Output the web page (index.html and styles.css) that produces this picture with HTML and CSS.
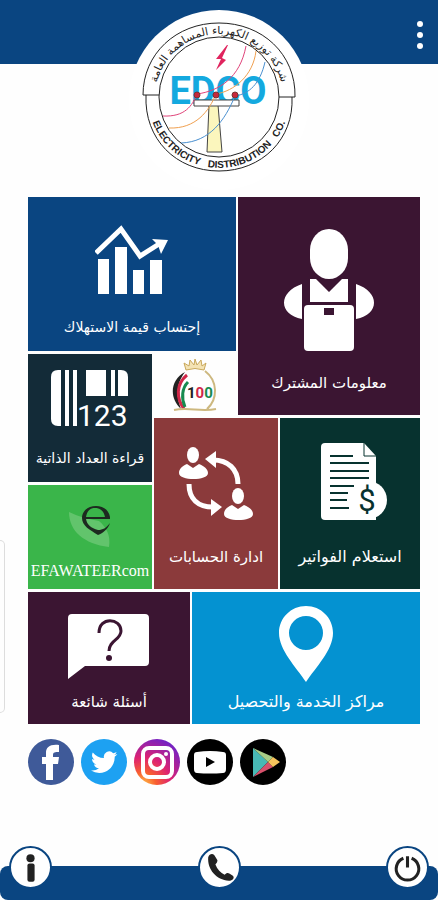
FILE: index.html
```html
<!DOCTYPE html>
<html lang="ar">
<head>
  <meta charset="UTF-8">
  <meta name="viewport" content="width=device-width, initial-scale=1.0">
  <title>EDCO</title>
  <link rel="stylesheet" href="styles.css">
</head>
<body>
  <header class="top-bar">
    <svg class="logo" viewBox="0 0 180 180" role="img" aria-label="EDCO">
      <defs>
        <path id="ring-top" d="M26 88a64 64 0 0 1 128 0"/>
        <path id="ring-bottom" d="M19 87a71 71 0 0 0 142 0"/>
      </defs>
      <circle cx="90" cy="90" r="90" fill="#fff"/>
      <g fill="none" stroke="#222" stroke-width="1">
        <path d="M14 85C14 44 47 13 90 13s77 31 76 74h-16"/>
        <path d="M14 85h16M17 85c-2 44 30 76 73 76s75-32 73-74"/>
        <circle cx="90" cy="87" r="60"/>
      </g>
      <text class="ring-ar" direction="rtl"><textPath href="#ring-top" startOffset="50%" text-anchor="middle">شركة توزيع الكهرباء المساهمة العامة</textPath></text>
      <text class="ring-en"><textPath href="#ring-bottom" startOffset="50%" text-anchor="middle">ELECTRICITY&#160;&#160;&#160;DISTRIBUTION&#160;&#160;&#160;CO.</textPath></text>
      <text class="logo-name" x="89" y="94" text-anchor="middle">EDCO</text>
      <path d="M98 35l-11 14h5l-5 11 10-10-4-2 6-13z" fill="#e0245e"/>
      <path d="M80 95h9l4 47H78z" fill="#fbf6bd" stroke="#444"/>
      <path d="M65 90h45v6H65z" fill="#fff" stroke="#444"/>
      <g fill="none" stroke-width="1">
        <path d="M117 36c-6 32-27 45-49 48-5 12-12 23-34 22" stroke="#e0447a"/>
        <path d="M127 41c-3 25-22 40-40 43-7 17-20 35-47 34" stroke="#f0a050"/>
        <path d="M136 52c-5 22-16 32-30 34-10 24-25 46-54 47" stroke="#4a90d0"/>
      </g>
      <g fill="#c8283c" stroke="#733"><circle cx="68" cy="85" r="3"/><circle cx="87" cy="85" r="3"/><circle cx="106" cy="85" r="3"/></g>
    </svg>
    <button class="menu" aria-label="القائمة"><span></span><span></span><span></span></button>
  </header>

  <main>
    <nav class="tiles">
      <a href="#" class="tile usage">
        <svg width="74" height="70" viewBox="0 0 74 70" fill="#fff">
          <path d="M3 34h11v35H3zM20 22h12v47H20zM38 45h11v24H38zM55 35h12v34H55z"/>
          <path d="M1 28L26 4l19 27 19-12" fill="none" stroke="#fff" stroke-width="5"/>
          <path d="M57 14l16 1-7 14-3-9z"/>
        </svg>
        <span class="label">إحتساب قيمة الاستهلاك</span>
      </a>
      <a href="#" class="tile customer">
        <svg width="92" height="123" viewBox="0 0 92 123" fill="#fff">
          <rect x="27" y="1" width="38" height="50" rx="19" ry="21"/>
          <path d="M27 51h6l13 13 13-13h6v23H27zM19 56v35C-5 86-5 64 19 56zM73 56v35c24-5 24-27 0-35z"/>
          <rect x="21" y="77" width="50" height="46" rx="4"/>
          <path d="M41 80h10v7H41z" fill="#3b1532"/>
        </svg>
        <span class="label">معلومات المشترك</span>
      </a>
      <a href="#" class="tile meter">
        <svg width="78" height="64" viewBox="0 0 78 64" fill="#fff">
          <path d="M10 0v56H7q-7 0-7-7V7q0-7 7-7zM14 0h4v56h-4zM22 0h4v56h-4zM35 0h20v26H35zM60 0h4v26h-4zM67 0h3q7 0 7 7v19H67z"/>
          <text class="digits" x="26" y="56">123</text>
        </svg>
        <span class="label">قراءة العداد الذاتية</span>
      </a>
      <div class="tile centenary">
        <svg width="46" height="56" viewBox="0 0 46 56" fill="none">
          <path d="M14 13L12 6l5 3 1-6 4 5 1-6 2 6 4-5 1 6 4-3-2 7q-9-3-18 0z" fill="#f4e3b4" stroke="#c9a85b"/>
          <path d="M13 15C-2 23-3 41 9 52 4 39 4 27 13 15z" fill="#222"/>
          <path d="M15 18C4 27 4 41 12 52" stroke="#d02748" stroke-width="3"/>
          <path d="M16 25c-6 6-7 16-3 25" stroke="#168a50" stroke-width="3"/>
          <path d="M33 14c13 10 13 28 2 38M2 53c14-3 27 2 42-1" stroke="#cdb87f" stroke-width="2"/>
          <text class="hundred" x="15" y="41"><tspan fill="#222">1</tspan><tspan fill="#d02748">0</tspan><tspan fill="#168a50">0</tspan></text>
        </svg>
      </div>
      <a href="#" class="tile accounts">
        <svg width="74" height="74" viewBox="0 0 74 74" fill="#fff">
          <g id="user"><ellipse cx="14" cy="8" rx="6" ry="8"/><path d="M8 17l6 4 6-4c5 2 9 5 9 9 0 8-29 8-29 0 0-4 3-7 8-9z"/></g>
          <use href="#user" x="45" y="41"/>
          <path d="M59 37c0-15-10-24-25-24M10 37c0 15 9 23 24 23" fill="none" stroke="#fff" stroke-width="5"/>
          <path d="M26 12L37 4v17zM43 60l-11-8v17z"/>
        </svg>
        <span class="label">ادارة الحسابات</span>
      </a>
      <a href="#" class="tile bills">
        <svg width="78" height="78" viewBox="-10 0 78 78" fill="#fff">
          <path d="M4 0h39l12 13v64H4q-4 0-4-4V4q0-4 4-4z"/>
          <path d="M43 0v13h12" fill="none" stroke="#07322f"/>
          <circle cx="47" cy="57" r="19"/>
          <path d="M9 13h23M9 20h39M9 28h39M9 35h39M9 43h24M9 50h18M9 57h17M9 65h19" stroke="#07322f" stroke-width="2"/>
          <text class="dollar" x="46" y="68" text-anchor="middle">$</text>
        </svg>
        <span class="label">استعلام الفواتير</span>
      </a>
      <a href="#" class="tile efawateer">
        <svg width="46" height="46" viewBox="0 0 46 46">
          <path d="M2 9c0 19 15 32 40 35 2-12-3-20-10-26-10-2-20-4-30-9z" fill="#62c46c"/>
          <path d="M18 14h25C42 7 36 3 29 3c-8 0-14 5-14 12 0 8 8 12 16 17 5-2 10-6 12-12-4 5-7 7-12 7-7-2-11-5-12-11h24v-2zm1 0c1-6 4-9 9-9s9 3 10 9z" fill="#1d2a20"/>
        </svg>
        <span class="label brand">EFAWATEERcom</span>
      </a>
    </nav>

    <nav class="tiles-bottom">
      <a href="#" class="tile faq">
        <svg width="82" height="66" viewBox="0 0 82 66" fill="#fff">
          <path d="M4 0h73q4 0 4 4v44q0 4-4 4H17L0 65V4q0-4 4-4z"/>
          <path d="M31 19c0-17 22-15 22-2 0 9-12 9-12 20" fill="none" stroke="#3b1532" stroke-width="3"/>
          <circle cx="41" cy="44" r="3" fill="#3b1532"/>
        </svg>
        <span class="label">أسئلة شائعة</span>
      </a>
      <a href="#" class="tile centers">
        <svg width="54" height="76" viewBox="0 0 54 76">
          <path d="M27 0C12 0 0 12 0 27c0 17 17 34 27 49 10-15 27-32 27-49C54 12 42 0 27 0zm0 10a17 17 0 1 1 0 34 17 17 0 0 1 0-34z" fill="#fff"/>
        </svg>
        <span class="label">مراكز الخدمة والتحصيل</span>
      </a>
    </nav>

    <div class="social">
      <a href="#" aria-label="Facebook">
        <svg viewBox="0 0 46 46"><circle cx="23" cy="23" r="23" fill="#3f5a99"/><path d="M18 41V25h-4v-7h4v-4c0-6 4-9 13-8v7c-4 0-6 0-6 3v2h6l-1 7h-5v16z" fill="#fff"/></svg>
      </a>
      <a href="#" aria-label="Twitter">
        <svg viewBox="0 0 46 46"><circle cx="23" cy="23" r="23" fill="#1da1f2"/><path transform="translate(10 10) scale(1.1)" d="M23.95 4.57a10 10 0 0 1-2.82.77 4.96 4.96 0 0 0 2.16-2.72c-.95.55-2 .95-3.13 1.18a4.92 4.92 0 0 0-8.38 4.48C7.69 8.1 4.07 6.13 1.64 3.16a4.92 4.92 0 0 0 1.52 6.57 4.9 4.9 0 0 1-2.23-.61v.06c0 2.38 1.7 4.37 3.95 4.82a5 5 0 0 1-2.21.09 4.94 4.94 0 0 0 4.6 3.42A9.87 9.87 0 0 1 0 19.54a14 14 0 0 0 7.55 2.21c9.05 0 14-7.5 14-13.98 0-.21 0-.42-.02-.63a9.94 9.94 0 0 0 2.42-2.57z" fill="#fff"/></svg>
      </a>
      <a href="#" aria-label="Instagram">
        <svg viewBox="0 0 46 46">
          <defs><radialGradient id="insta" cx="0.2" cy="1" r="1.1"><stop offset="0" stop-color="#ffc24a"/><stop offset=".25" stop-color="#f9602f"/><stop offset=".55" stop-color="#dd2272"/><stop offset="1" stop-color="#6d22c9"/></radialGradient></defs>
          <circle cx="23" cy="23" r="23" fill="url(#insta)"/>
          <g fill="none" stroke="#fff" stroke-width="4"><rect x="9" y="9" width="29" height="29" rx="6"/><circle cx="23" cy="23" r="7"/></g>
          <circle cx="32" cy="15" r="2" fill="#fff"/>
        </svg>
      </a>
      <a href="#" aria-label="YouTube">
        <svg viewBox="0 0 46 46"><circle cx="23" cy="23" r="23"/><path d="M10 13q13-2 26 0 3 0 3 3v14q0 4-3 4-13 1-26 0-3 0-3-4V16q0-3 3-3z" fill="#fff"/><path d="M19 18l9 5-9 5z"/></svg>
      </a>
      <a href="#" aria-label="Google Play">
        <svg viewBox="0 0 46 46"><circle cx="23" cy="23" r="23"/><path d="M13 9v29l15-15z" fill="#48b9b5"/><path d="M13 9l15 14 5-5z" fill="#a9ce87"/><path d="M13 38l15-15 5 5z" fill="#d8516c"/><path d="M33 18l7 5-7 5-5-5z" fill="#f6c45c"/></svg>
      </a>
    </div>
  </main>

  <div class="edge-handle"></div>

  <footer class="bottom-bar">
    <button aria-label="معلومات">
      <svg viewBox="0 0 38 38" fill="#222"><circle cx="19" cy="10" r="4"/><rect x="16" y="15" width="7" height="18" rx="2"/></svg>
    </button>
    <button aria-label="اتصال">
      <svg viewBox="0 0 38 38" fill="#222"><path d="M8 9c1-3 4-4 6-2l3 5c0 2-1 3-2 4 2 5 5 8 9 10 2-2 3-2 5-1l3 2c2 2 0 5-4 5C16 31 7 21 8 9z"/></svg>
    </button>
    <button aria-label="خروج">
      <svg viewBox="0 0 38 38" fill="none" stroke="#222" stroke-width="3"><path d="M15 10a11 11 0 1 0 8 0M19 8v11"/></svg>
    </button>
  </footer>
</body>
</html>
```
FILE: styles.css
```css
* {
  box-sizing: border-box;
}

body {
  margin: 0;
  min-height: 100vh;
  display: flex;
  flex-direction: column;
  position: relative;
  background: #fefefe;
  font-family: "DejaVu Sans", sans-serif;
}

button {
  padding: 0;
  border: none;
  background: none;
  cursor: pointer;
}

.top-bar {
  position: relative;
  height: 64px;
  background: #0a4581;
  display: flex;
  justify-content: flex-end;
  align-items: center;
  padding: 6px 11px 0;
}

/* round logo hangs over the lower edge of the bar */
.logo {
  position: absolute;
  top: 10px;
  left: 50%;
  width: 180px;
  height: 180px;
  transform: translateX(-50%);
}

.logo-name {
  font: bold 38px Roboto, sans-serif;
  fill: #14a9df;
}

.ring-ar {
  font: 11px "DejaVu Sans", sans-serif;
  fill: #222;
}

.ring-en {
  font: bold 10px "Liberation Sans", Arial, sans-serif;
  fill: #222;
}

.menu {
  display: flex;
  flex-direction: column;
  gap: 5px;
  padding: 4px;
}

.menu span {
  width: 6px;
  height: 6px;
  border-radius: 50%;
  background: #fff;
}

main {
  flex: 1;
  margin-top: 133px;
  padding: 0 18px 0 28px;
}

.tiles {
  display: grid;
  grid-template-columns: 124fr 82fr 40fr 140fr;
  grid-template-rows: 154px 61px 64px 104px;
  grid-template-areas:
    "usage usage customer customer"
    "meter centenary customer customer"
    "meter accounts accounts bills"
    "efawateer accounts accounts bills";
  gap: 3px 2px;
}

.tiles-bottom {
  display: grid;
  grid-template-columns: 162fr 228fr;
  grid-template-rows: 132px;
  gap: 2px;
  margin-top: 3px;
}

.tile {
  display: flex;
  flex-direction: column;
  align-items: center;
  justify-content: flex-end;
  gap: 20px;
  padding-bottom: 12px;
  color: #fff;
  text-decoration: none;
}

.label {
  font-size: 16px;
  line-height: 24px;
  white-space: nowrap;
}

.usage {
  grid-area: usage;
  background: #0a4581;
}

.customer {
  grid-area: customer;
  background: #3b1532;
  padding-bottom: 20px;
}

.meter {
  grid-area: meter;
  background: #132b38;
  gap: 12px;
}

.usage .label,
.meter .label {
  font-size: 14px;
}

.customer .label,
.accounts .label,
.faq .label {
  font-size: 15px;
}

.centenary {
  grid-area: centenary;
  padding-bottom: 2px;
}

.accounts {
  grid-area: accounts;
  background: #8b3a3b;
  padding-bottom: 20px;
  gap: 24px;
}

.bills {
  grid-area: bills;
  background: #07322f;
  padding-bottom: 20px;
  gap: 24px;
}

.efawateer {
  grid-area: efawateer;
  background: #3ab54a;
  padding-bottom: 6px;
  gap: 10px;
}

.brand {
  font-family: "Liberation Serif", serif;
}

.faq {
  background: #3b1532;
  padding-bottom: 10px;
  gap: 10px;
}

.centers {
  background: #0492d1;
  padding-bottom: 10px;
  gap: 8px;
}

.digits {
  font: 30px Roboto, sans-serif;
}

.hundred {
  font: bold 15px Roboto, sans-serif;
}

.dollar {
  font: 31px Roboto, sans-serif;
  fill: #07322f;
}

.social {
  display: flex;
  gap: 7px;
  margin-top: 15px;
}

.social a {
  width: 46px;
  height: 46px;
}

.social svg {
  display: block;
}

/* pull-out handle at the left edge of the screen */
.edge-handle {
  position: absolute;
  left: 0;
  top: 60%;
  width: 5px;
  height: 173px;
  border: 1px solid #ddd;
  border-left: none;
  border-radius: 0 5px 5px 0;
}

.bottom-bar {
  height: 34px;
  display: flex;
  justify-content: space-between;
  align-items: flex-start;
  padding: 0 9px;
  background: #0a4581;
  border-radius: 8px;
}

.bottom-bar button {
  width: 43px;
  height: 43px;
  margin-top: -20px;
  border: 2px solid #0a4581;
  border-radius: 50%;
  background: #fff;
}

.bottom-bar svg {
  display: block;
}
```
